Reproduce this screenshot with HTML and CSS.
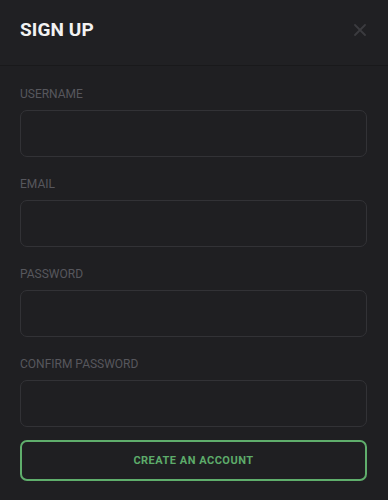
FILE: index.html
```html
<!DOCTYPE html>
<html lang="en">
<head>
<meta charset="utf-8">
<title>Sign up</title>
<link rel="stylesheet" href="styles.css">
</head>
<body>
<div class="modal">
  <header class="modal-header">
    <h1 class="modal-title">SIGN UP</h1>
    <button class="close" aria-label="Close">
      <svg width="12" height="12" viewBox="0 0 12 12"><path d="M1 1L11 11M11 1L1 11" stroke="currentColor" stroke-width="1.8" stroke-linecap="round"/></svg>
    </button>
  </header>
  <form class="form">
    <div class="field">
      <label class="label">USERNAME</label>
      <input class="input" type="text">
    </div>
    <div class="field">
      <label class="label">EMAIL</label>
      <input class="input" type="email">
    </div>
    <div class="field">
      <label class="label">PASSWORD</label>
      <input class="input" type="password">
    </div>
    <div class="field">
      <label class="label">CONFIRM PASSWORD</label>
      <input class="input" type="password">
    </div>
    <button class="submit" type="button">CREATE AN ACCOUNT</button>
  </form>
</div>
</body>
</html>
```
FILE: styles.css
```css
html, body {
  margin: 0;
  padding: 0;
  background: #1f1f22;
  font-family: Roboto, "Liberation Sans", sans-serif;
}
.modal {
  width: 388px;
  height: 500px;
  background: #1f1f22;
}
.modal-header {
  height: 65px;
  border-bottom: 1px solid #19191b;
  background: #202023;
  display: flex;
  align-items: center;
  justify-content: space-between;
  padding: 0 21px 6px 20px;
  box-sizing: border-box;
  height: 66px;
}
.modal-title {
  margin: 0;
  font-size: 19px;
  font-weight: 700;
  color: #f2f2f2;
  letter-spacing: 0.1px;
}
.close {
  background: none;
  border: 0;
  padding: 0;
  color: #3b3b3f;
  display: flex;
  margin-right: 1px;
}
.form {
  display: flex;
  flex-direction: column;
  gap: 20px;
  padding: 21px 21px 0 20px;
}
.field {
  display: flex;
  flex-direction: column;
  gap: 9px;
}
.label {
  font-size: 12px;
  line-height: 14px;
  color: #57575d;
}
.input {
  height: 47px;
  box-sizing: border-box;
  border: 1px solid #323236;
  border-radius: 7px;
  background: #1f1f22;
  margin: 0;
  outline: none;
}
.submit {
  margin-top: -7px;
  height: 41px;
  box-sizing: border-box;
  border: 2px solid #5fae6c;
  border-radius: 7px;
  background: #1f1f22;
  color: #5dab6a;
  font-family: Roboto, "Liberation Sans", sans-serif;
  font-weight: 700;
  font-size: 11px;
  letter-spacing: 0.5px;
  padding: 0;
}
```
